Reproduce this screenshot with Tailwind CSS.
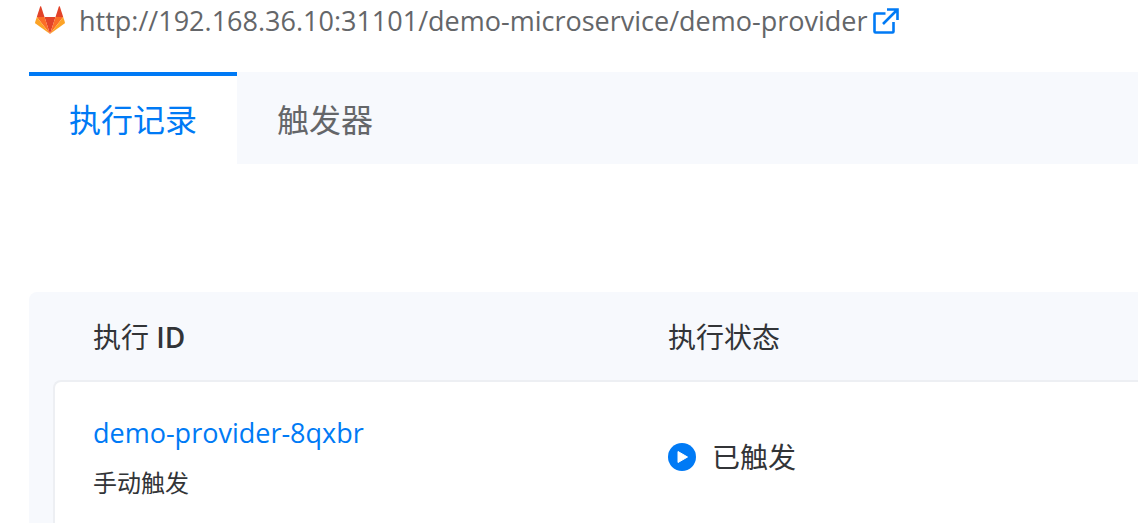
<!DOCTYPE html>
<html lang="zh-CN">
<head>
<meta charset="utf-8">
<meta name="viewport" content="width=device-width, initial-scale=1">
<title>demo-provider</title>
<script src="https://cdn.jsdelivr.net/npm/@tailwindcss/browser@4"></script>
</head>
<body class="min-h-screen flex flex-col bg-white pl-[29px] overflow-x-hidden font-['Open_Sans','Noto_Sans_CJK_SC',sans-serif] text-[#323437]">
  <header class="flex items-center h-[42px] mb-[30px] pl-1.5">
    <svg class="w-[30px] h-7 shrink-0 -mt-0.5" viewBox="0 0 30 28" aria-hidden="true">
      <path fill="#e24329" d="M15 28 20.5 11H9.5z"/>
      <path fill="#fc6d26" d="M15 28 9.500 11H1.800z"/>
      <path fill="#fca326" d="M1.800 11 .1 16.200a1.200 1.200 0 0 0 .4 1.300L15 28z"/>
      <path fill="#e24329" d="M1.800 11H9.500L6.200.8c-.2-.6-.9-.6-1.100 0z"/>
      <path fill="#fc6d26" d="M15 28 20.500 11H28.200z"/>
      <path fill="#fca326" d="M28.200 11 29.900 16.200a1.200 1.200 0 0 1-.4 1.300L15 28z"/>
      <path fill="#e24329" d="M28.200 11H20.500L23.800.8c.2-.6.9-.6 1.100 0z"/>
    </svg>
    <a href="#" class="flex items-center ml-3.5 gap-1.5 text-[27px] leading-9 text-[#646669] whitespace-nowrap">
      <span>http://192.168.36.10:31101/demo-microservice/demo-provider</span>
      <svg class="w-[26px] h-[26px] shrink-0" viewBox="0 0 26 26" fill="none" stroke="#007af5" stroke-width="2.600" aria-hidden="true">
        <path stroke-linejoin="round" d="M12.500 5.500H2.500A1 1 0 0 0 1.500 6.500V23.500A1 1 0 0 0 2.500 24.500H19.500A1 1 0 0 0 20.500 23.500V14"/>
        <path d="M14 1.500H24.500V12M24 2 10 16"/>
      </svg>
    </a>
  </header>

  <div role="tablist" class="flex h-[92px] mb-32 bg-[#f7f9fd] text-[32px]">
    <button type="button" role="tab" aria-selected="true" class="border-t-4 border-[#007af5] bg-white px-10 text-[#007af5] whitespace-nowrap">执行记录</button>
    <button type="button" role="tab" aria-selected="false" class="border-t-4 border-transparent px-10 text-[#646669] whitespace-nowrap">触发器</button>
  </div>

  <main class="flex-1 flex flex-col pl-6 bg-[#f7f9fd] rounded-tl-lg">
    <table class="w-full flex-1 table-fixed border-separate border-spacing-0 text-left text-[28px] leading-10">
      <thead>
        <tr class="h-[88px]">
          <th scope="col" class="w-[53%] pl-10 pt-0.5 font-normal">执行 <span class="font-semibold">ID</span></th>
          <th scope="col" class="pl-10 pt-0.5 font-normal">执行状态</th>
        </tr>
      </thead>
      <tbody>
        <tr>
          <td class="border-t-2 border-l-2 border-[#edeff3] rounded-tl-lg bg-white pl-[38px] pt-7 pb-5">
            <a href="#" class="block text-[27px] text-[#007af5]">demo-provider-8qxbr</a>
            <div class="mt-3 text-2xl leading-9">手动触发</div>
          </td>
          <td class="border-t-2 border-[#edeff3] bg-white pl-10 pt-2">
            <div class="flex items-center gap-4">
              <svg class="w-7 h-7 shrink-0" viewBox="0 0 28 28" aria-hidden="true">
                <circle cx="14" cy="14" r="14" fill="#007af5"/>
                <path d="M10 8.500 19.500 14 10 19.500z" fill="#fff" stroke="#fff" stroke-linejoin="round"/>
              </svg>
              <span>已触发</span>
            </div>
          </td>
        </tr>
      </tbody>
    </table>
  </main>
</body>
</html>
